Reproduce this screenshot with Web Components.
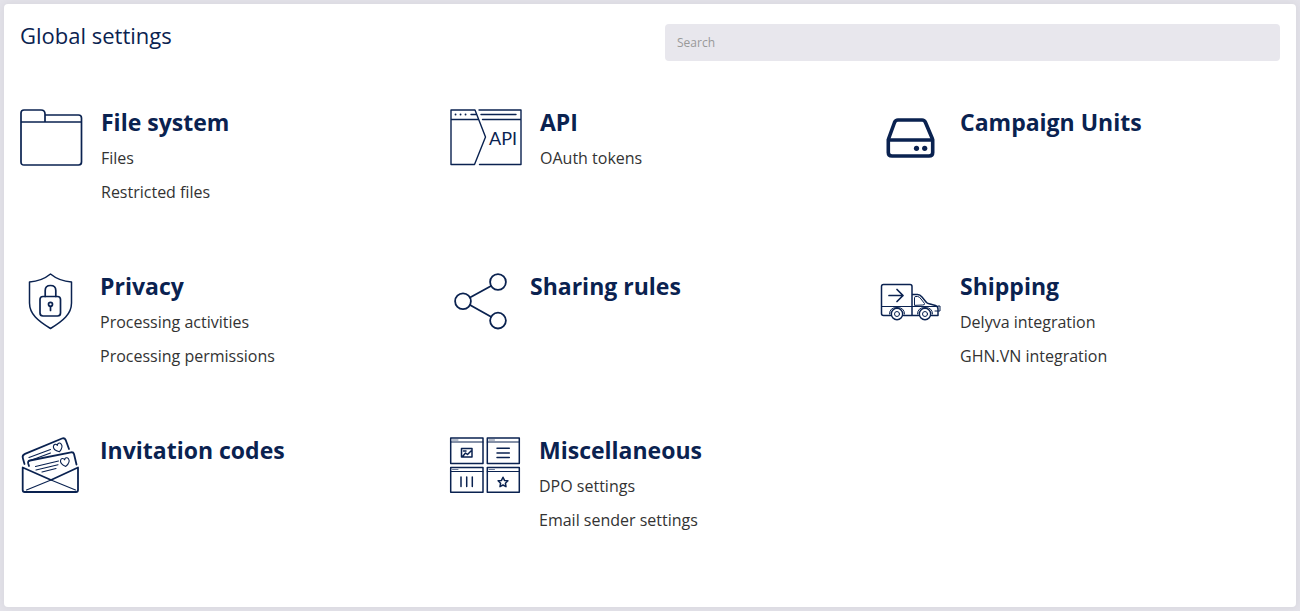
<!DOCTYPE html>
<html lang="en">
<head>
<meta charset="utf-8">
<title>Global settings</title>
<style>
html { background: #e3e2e9; }
body { margin: 0; font-family: "Open Sans", "Noto Sans", sans-serif; color: #0a2250; }
</style>
</head>
<body>
<settings-page>
  <settings-header slot="header">Global settings</settings-header>
  <settings-block icon="folder" heading="File system">
    <settings-link href="#files">Files</settings-link>
    <settings-link href="#restricted">Restricted files</settings-link>
  </settings-block>
  <settings-block icon="api" heading="API">
    <settings-link href="#oauth">OAuth tokens</settings-link>
  </settings-block>
  <settings-block icon="drive" heading="Campaign Units"></settings-block>
  <settings-block icon="shield" heading="Privacy">
    <settings-link href="#activities">Processing activities</settings-link>
    <settings-link href="#permissions">Processing permissions</settings-link>
  </settings-block>
  <settings-block icon="share" heading="Sharing rules"></settings-block>
  <settings-block icon="truck" heading="Shipping">
    <settings-link href="#delyva">Delyva integration</settings-link>
    <settings-link href="#ghn">GHN.VN integration</settings-link>
  </settings-block>
  <settings-block icon="invite" heading="Invitation codes"></settings-block>
  <settings-block icon="windows" heading="Miscellaneous">
    <settings-link href="#dpo">DPO settings</settings-link>
    <settings-link href="#email">Email sender settings</settings-link>
  </settings-block>
</settings-page>

<script>
class BaseElement extends HTMLElement {
  render(html) {
    if (!this.shadowRoot) this.attachShadow({ mode: 'open' });
    this.shadowRoot.innerHTML = html;
  }
}

customElements.define('settings-page', class extends BaseElement {
  connectedCallback() {
    this.render(`
      <style>
        :host { display: block; padding: 4px; }
        main { box-sizing: border-box; min-height: calc(100vh - 8px); background: #fff;
               border-radius: 4px; box-shadow: 0 0 8px rgba(20, 20, 40, .06); padding: 20px 16px 7px; }
        .grid { display: grid; grid-template-columns: repeat(3, minmax(0, 1fr)); gap: 0 32px;
                grid-auto-rows: minmax(164px, auto); padding-right: 2px; margin-top: 47px; }
      </style>
      <main>
        <slot name="header"></slot>
        <div class="grid"><slot></slot></div>
      </main>`);
  }
});

customElements.define('settings-header', class extends BaseElement {
  connectedCallback() {
    this.render(`
      <style>
        :host { display: grid; grid-template-columns: repeat(2, minmax(0, 1fr)); gap: 30px; align-items: start; }
        h1 { margin: 0; font-size: 22px; line-height: 22px; font-weight: 400; }
        input { width: 100%; box-sizing: border-box; height: 37px; padding: 0 12px; border: 0;
                border-radius: 4px; background: #e8e7ed; font: 12px "Open Sans", "Noto Sans", sans-serif; color: #333; }
        input::placeholder { color: #999; opacity: 1; }
      </style>
      <h1><slot></slot></h1>
      <input type="search" placeholder="Search" aria-label="Search">`);
  }
});

customElements.define('settings-link', class extends BaseElement {
  connectedCallback() {
    this.render(`
      <style>
        :host { display: block; }
        a { color: #333; font-size: 16px; line-height: 22px; text-decoration: none; }
        a:hover { text-decoration: underline; }
      </style>
      <a href="${this.getAttribute('href')}"><slot></slot></a>`);
  }
});

customElements.define('settings-block', class extends BaseElement {
  connectedCallback() {
    this.render(`
      <style>
        :host { display: flex; gap: 20px; align-items: flex-start; }
        h2 { margin: 0; font-size: 23px; line-height: 28px; font-weight: 700; }
        .text { display: flex; flex-direction: column; gap: 11px; min-width: 0; }
        .links { display: flex; flex-direction: column; gap: 12px; }
      </style>
      <settings-icon name="${this.getAttribute('icon')}"></settings-icon>
      <div class="text">
        <h2>${this.getAttribute('heading')}</h2>
        <div class="links"><slot></slot></div>
      </div>`);
  }
});

const HEART = 'M0 4.5 C-4 2 -5 -.5 -4 -2.6 C-3 -4.6 -.6 -4.2 0 -2.2 C.6 -4.2 3 -4.6 4 -2.6 C5 -.5 4 2 0 4.5Z';
const ICONS = {
  folder: [61, `<path d="M1 14V5Q1 2 4 2H21Q25 2 25 6V14M25 7H58.500Q61.500 7 61.500 10V54Q61.500 57 58.500 57H4Q1 57 1 54V14H61.500"/>`],
  api: [70, `<g stroke-width="1.400"><path d="M25 2H1V56.500H24.500L35.500 29Z M1 11.500H28.500M29 2H71V56.500H29.500M32.500 11.500H71M21 6.500H26.500M31 6.500H66"/>
    <path d="M5.500 6.500h.1M10.500 6.500h.1M15.500 6.500h.1" stroke-width="1.800"/></g>
    <text x="39" y="37" font-family="Lato, sans-serif" font-size="18" fill="currentColor" stroke="none">API</text>`],
  drive: [60, `<g stroke-width="3.600"><path d="M8.500 31L14.500 14.500Q15.500 12 18 12H42Q44.500 12 45.500 14.500L52.500 31"/>
    <path d="M8.300 32H52.700V44.500Q52.700 48 49 48H12Q8.300 48 8.300 44.500Z"/></g>
    <g fill="currentColor" stroke="none"><circle cx="36.500" cy="40.300" r="2.600"/><circle cx="44.700" cy="40.300" r="2.600"/></g>`],
  shield: [60, `<path stroke-width="1.500" d="M30.500 2C25 6.500 17 9.500 9.500 10V31C9.500 42 18 49 30.500 56.500C43 49 51.500 42 51.500 31V10C44 9.500 36 6.500 30.500 2Z"/>
    <rect x="20" y="24.500" width="20.500" height="19.500" rx="3"/><path d="M25.200 24.500V18.500Q25.200 13.500 30.500 13.500T35.800 18.500V24.500"/>
    <circle cx="30.500" cy="32.300" r="2"/><path d="M30.500 34.500V38.500"/>`],
  share: [60, `<g stroke-width="1.800"><circle cx="13" cy="29.300" r="7.900"/><circle cx="48" cy="10" r="7.900"/><circle cx="48" cy="48.600" r="7.900"/><path d="M20 25.500L41 14M20 33L41 44.800"/></g>`],
  truck: [60, `<g stroke-width="1.500"><path d="M10.500 43.500H3.500Q1.500 43.500 1.500 41.500V14.500Q1.500 12.500 3.500 12.500H30Q32 12.500 32 14.500V43M23.500 43.500H38.500M32 22.500H37.500Q40 22.500 42 25L46.500 30.500Q47.500 31.500 50 32L55.500 33.500Q58 34.500 58 37V43.500H51.500"/>
    <circle cx="17" cy="42" r="5.700"/><circle cx="45" cy="42" r="5.700"/></g>
    <g stroke-width="1"><path d="M1.500 34.500H58M34.500 33V25.500Q34.500 24.500 36 24.500H37.500Q39.500 24.500 41 27L44.500 31.500Q45 33 43 33Z"/>
    <path d="M9.500 42Q9.500 35.500 17 35.500T24.500 42M37.500 42Q37.500 35.500 45 35.500T52.500 42M58 34H60V39H55"/>
    <circle cx="17" cy="42" r="2.500"/><circle cx="45" cy="42" r="2.500"/></g>
    <path d="M9 23.500H23M17 17.500L23 23.500L17 29.500"/>`],
  invite: [60, `<g stroke-width="1.800"><path d="M2.700 31.500V54Q2.700 56 4.700 56H56Q58 56 58 54V31.500L31 44Z"/>
    <path d="M4.500 28L2.800 22Q2 19 5 17.800L42 2.500Q44.500 1.500 45.700 4L49 13"/>
    <path d="M9 30L8.200 27.500Q7.500 25 10 24.500L51 16.300Q53.500 16 54 18L56.500 28.500"/></g>
    <g stroke-width="1.100"><path d="M6.500 54L31 44L55.500 54M9 21.500L30.500 13.500M9 25L30.500 17M15.500 30.500L38.500 25M16 34L38 28.700M22 36L36 32.500"/>
    <path transform="translate(38 11.500) rotate(-18)" d="${HEART}"/><path transform="translate(45 26) rotate(-10)" d="${HEART}"/></g>`],
  windows: [69, `<g stroke-width="1.500"><path d="M.700 2H33V27.500H.700ZM37.300 2H69.300V27.500H37.300ZM.700 31.500H33V56.300H.700ZM37.300 31.500H69.300V56.300H37.300Z"/>
    <path d="M.700 6H33M37.300 6H69.300M.700 35.500H33M37.300 35.500H69.300" stroke-width="1.200"/>
    <path d="M2.500 4H8M39 4H44.500M2.500 33.500H8M39 33.500H44.500" stroke-width=".600"/>
    <path d="M11.500 12.500H22V21H11.500ZM13 20L15.500 17L17.500 18.500L21 15M13.500 15H16M47 12.300H59.300M47 17H59.300M47 21.500H59.300M11 41V50.500M16.700 41V50.500M22.300 41V50.500"/>
    <path d="M53 41.200L54.500 44.400L57.900 44.800L55.400 47.200L56 50.700L53 49L50 50.700L50.600 47.200L48.100 44.800L51.500 44.400Z"/></g>`]
};

customElements.define('settings-icon', class extends BaseElement {
  connectedCallback() {
    const [width, art] = ICONS[this.getAttribute('name')];
    this.render(`
      <style>
        :host { display: block; flex: none; }
        svg { display: block; overflow: visible; }
      </style>
      <svg width="${width}" height="60" viewBox="0 0 ${width} 60" fill="none" stroke="currentColor"
        stroke-width="1.700" stroke-linecap="round" stroke-linejoin="round" aria-hidden="true">${art}</svg>`);
  }
});
</script>
</body>
</html>
